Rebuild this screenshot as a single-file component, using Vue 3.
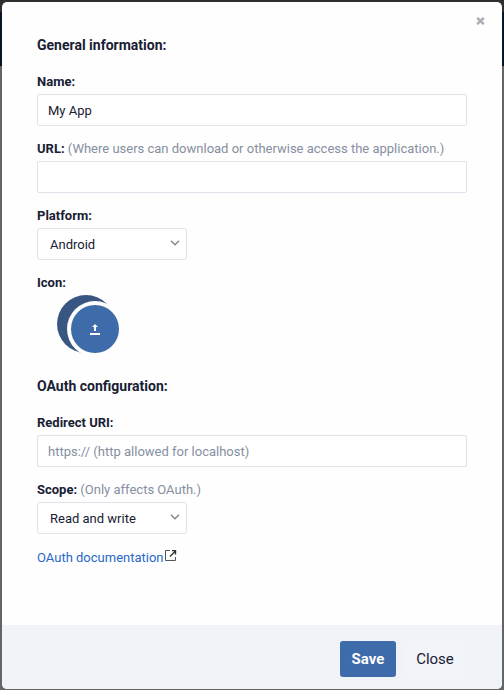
<script setup>
import { ref } from 'vue'

const name = ref('My App')
const url = ref('')
const redirect = ref('')
</script>

<template>
  <div class="backdrop">
    <form class="modal" @submit.prevent>
      <button class="dismiss" type="button" aria-label="Close dialog">
        <svg width="9" height="8" viewBox="0 0 9 8"><path d="M1.2 .8 7.8 7.2M7.8 .8 1.2 7.2" /></svg>
      </button>
      <div class="body">
        <h2 class="heading">General information:</h2>
        <label class="label"><b>Name:</b></label>
        <input v-model="name" class="field" type="text" />
        <label class="label"><b>URL:</b> <span class="hint">(Where users can download or otherwise access the application.)</span></label>
        <input v-model="url" class="field" type="text" />
        <label class="label"><b>Platform:</b></label>
        <div class="select">
          <span>Android</span>
          <svg width="10" height="6" viewBox="0 0 10 6"><path d="M1 .8 5 4.8 9 .8" /></svg>
        </div>
        <label class="label"><b>Icon:</b></label>
        <div class="avatar">
          <svg width="70" height="62" viewBox="0 0 70 62">
            <circle cx="29" cy="29" r="29" fill="#395682" />
            <circle cx="38" cy="34" r="28" fill="#fefefe" />
            <circle cx="38" cy="34" r="24" fill="#3e6ba9" />
            <path d="M38 29 41 32H39V36H37V32H35ZM33 38H43V40H33Z" fill="#fff" />
          </svg>
        </div>
        <h2 class="heading">OAuth configuration:</h2>
        <label class="label"><b>Redirect URI:</b></label>
        <input v-model="redirect" class="field" type="text" placeholder="https:// (http allowed for localhost)" />
        <label class="label"><b>Scope:</b> <span class="hint">(Only affects OAuth.)</span></label>
        <div class="select">
          <span>Read and write</span>
          <svg width="10" height="6" viewBox="0 0 10 6"><path d="M1 .8 5 4.8 9 .8" /></svg>
        </div>
        <a class="docs" href="#"><span>OAuth documentation</span><svg width="12" height="12" viewBox="0 0 12 12"><path d="M5 .5H.5V10.5H10.5V7" /><path d="M5 6.5 10 1.5M7 .5H10.5V4.5" /></svg></a>
      </div>
      <footer class="footer">
        <button class="save" type="submit">Save</button>
        <button class="close" type="button">Close</button>
      </footer>
    </form>
  </div>
</template>

<style>
body { margin: 0; }
</style>

<style scoped>
* { box-sizing: border-box; }
.backdrop {
  height: 690px;
  padding: 2px 2px 1px;
  overflow: hidden;
  background: linear-gradient(#302f2f 0 12px, #071426 12px 66px, #656565 66px);
  font-family: Roboto, "Liberation Sans", sans-serif;
  font-size: 13px;
  color: #182033;
}
.modal {
  position: relative;
  height: 687px;
  display: flex;
  flex-direction: column;
  overflow: hidden;
  border-radius: 5px;
  background: #fefefe;
}
.dismiss {
  position: absolute;
  top: 15px;
  right: 17px;
  display: flex;
  padding: 0;
  border: 0;
  background: none;
}
.dismiss path { fill: none; stroke: #acafb6; stroke-width: 2.5; }
.body { flex: 1; display: flex; flex-direction: column; padding: 33px 35px 0; }
.heading { margin: 0 0 17px; font-size: 14px; line-height: 20px; font-weight: 700; }
.label { height: 22px; line-height: 20px; white-space: nowrap; }
.label b { font-weight: 700; }
.hint { color: #858f9f; }
.field, .select {
  height: 32px;
  flex-shrink: 0;
  margin: 0 0 13px;
  border: 1px solid #dee3eb;
  border-radius: 2px;
  background: #fff;
  font: inherit;
  color: #182033;
}
.field { width: 430px; padding: 0 10px; outline: none; }
.field::placeholder { color: #858f9f; opacity: 1; }
.select {
  width: 150px;
  display: flex;
  align-items: center;
  justify-content: space-between;
  padding: 0 6px 0 12px;
  border-radius: 3px;
}
.select svg { margin-top: -2px; }
.select path { fill: none; stroke: #858585; stroke-width: 1.4; }
.avatar { height: 81px; padding-left: 20px; }
.avatar svg { display: block; }
.docs { display: flex; align-items: center; height: 20px; color: #2868c7; text-decoration: none; }
.docs svg { margin: -2px 0 0 1px; }
.docs path { fill: none; stroke: #555; stroke-width: 1; }
.docs path + path { stroke: #333; stroke-width: 1.4; }
.footer {
  height: 64px;
  display: flex;
  align-items: flex-start;
  justify-content: flex-end;
  gap: 8px;
  padding: 16px 36px 0;
  background: #f0f3f8;
}
.save, .close {
  height: 36px;
  padding: 0;
  border: 0;
  border-radius: 3px;
  font: inherit;
  font-size: 15px;
}
.save { width: 56px; background: #3e6ba9; color: #fff; font-weight: 700; }
.close { width: 62px; background: #f1f4f9; color: #182033; }
</style>
